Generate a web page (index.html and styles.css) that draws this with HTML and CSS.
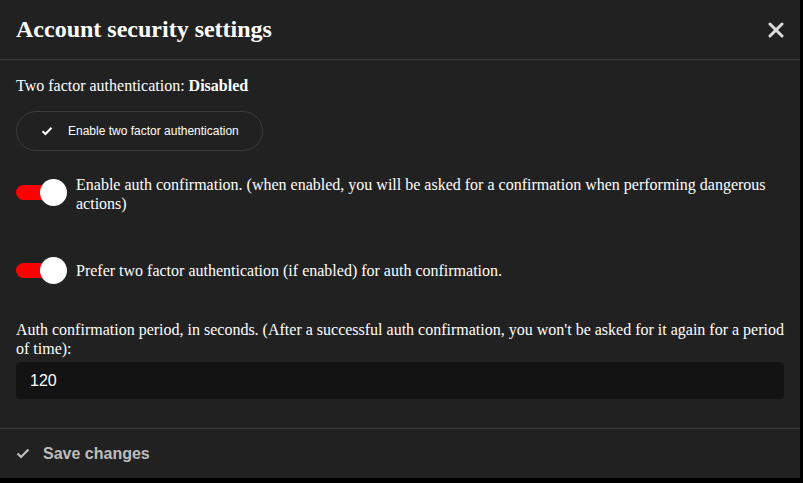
FILE: index.html
```html
<!DOCTYPE html>
<html>
<head>
<meta charset="utf-8">
<link rel="stylesheet" href="styles.css">
</head>
<body>
<div class="dialog">
  <div class="header">
    <h1 class="title">Account security settings</h1>
    <button class="close" aria-label="Close">
      <svg width="16" height="16" viewBox="0 0 16 16"><path d="M2 2L14 14M14 2L2 14" stroke="#dcdcdc" stroke-width="3" stroke-linecap="round"/></svg>
    </button>
  </div>
  <div class="body">
    <div class="status">Two factor authentication: <b>Disabled</b></div>
    <button class="pill">
      <svg width="12" height="10" viewBox="0 0 12 10"><path d="M1.5 5.2L4.5 8L10.5 1.8" fill="none" stroke="#fff" stroke-width="2"/></svg>
      <span>Enable two factor authentication</span>
    </button>
    <div class="toggle-row first">
      <span class="switch"><span class="track"></span><span class="thumb"></span></span>
      <span class="toggle-text">Enable auth confirmation. (when enabled, you will be asked for a confirmation when performing dangerous actions)</span>
    </div>
    <div class="toggle-row second">
      <span class="switch"><span class="track"></span><span class="thumb"></span></span>
      <span class="toggle-text">Prefer two factor authentication (if enabled) for auth confirmation.</span>
    </div>
    <div class="period">
      <label class="period-label">Auth confirmation period, in seconds. (After a successful auth confirmation, you won't be asked for it again for a period of time):</label>
      <div class="input">120</div>
    </div>
  </div>
  <div class="footer">
    <button class="save">
      <svg width="14" height="11" viewBox="0 0 14 11"><path d="M1.5 5.5L5 9L12.5 1.5" fill="none" stroke="#bdbdbd" stroke-width="2.2"/></svg>
      <span>Save changes</span>
    </button>
  </div>
</div>
</body>
</html>
```
FILE: styles.css
```css
html, body {
  margin: 0;
  padding: 0;
  background: #000;
}
body {
  width: 803px;
  height: 483px;
  overflow: hidden;
}
.dialog {
  width: 800px;
  height: 478px;
  background: #212121;
  color: #fff;
  font-family: "Liberation Serif", "Times New Roman", serif;
  font-size: 16px;
  display: flex;
  flex-direction: column;
}
.header {
  height: 59px;
  border-bottom: 1px solid #3a3a3a;
  display: flex;
  align-items: center;
  justify-content: space-between;
  padding: 0 16px;
}
.title {
  margin: 0;
  font-size: 24px;
  font-weight: bold;
  color: #fff;
}
.close {
  background: none;
  border: none;
  padding: 0;
  margin-right: 0;
  display: flex;
}
.body {
  padding: 16px 16px 0;
  flex: 1;
}
.status {
  line-height: 19px;
}
.pill {
  margin-top: 16px;
  height: 40px;
  width: 247px;
  border: 1px solid #3c3c3c;
  border-radius: 20px;
  background: transparent;
  color: #fff;
  display: flex;
  align-items: center;
  padding: 0 0 0 24px;
  gap: 15px;
  font-family: "Liberation Sans", Arial, sans-serif;
  font-size: 12px;
}
.toggle-row {
  display: flex;
  align-items: center;
  gap: 10px;
}
.toggle-row.first { margin-top: 24px; }
.toggle-row.first .switch { margin-bottom: 4px; }
.toggle-row.second { margin-top: 44px; }
.switch {
  position: relative;
  width: 50px;
  height: 27px;
  flex: none;
}
.track {
  position: absolute;
  left: 0;
  top: 6px;
  width: 38px;
  height: 15px;
  border-radius: 8px;
  background: #ff0000;
}
.thumb {
  position: absolute;
  left: 24px;
  top: 0;
  width: 27px;
  height: 27px;
  border-radius: 50%;
  background: #fff;
}
.toggle-text {
  line-height: 19px;
}
.period {
  margin-top: 36px;
}
.period-label {
  display: block;
  line-height: 19px;
}
.input {
  margin-top: 4px;
  height: 37px;
  background: #131313;
  border-radius: 4px;
  display: flex;
  align-items: center;
  padding: 0 14px;
  font-family: "Liberation Sans", Arial, sans-serif;
  font-size: 16px;
  color: #fff;
}
.footer {
  border-top: 1px solid #3a3a3a;
  height: 49px;
  display: flex;
  align-items: center;
  padding: 0 16px;
}
.save {
  background: none;
  border: none;
  padding: 0;
  display: flex;
  align-items: center;
  gap: 13px;
  color: #bdbdbd;
  font-family: "Liberation Sans", Arial, sans-serif;
  font-size: 16px;
  font-weight: bold;
}
```
